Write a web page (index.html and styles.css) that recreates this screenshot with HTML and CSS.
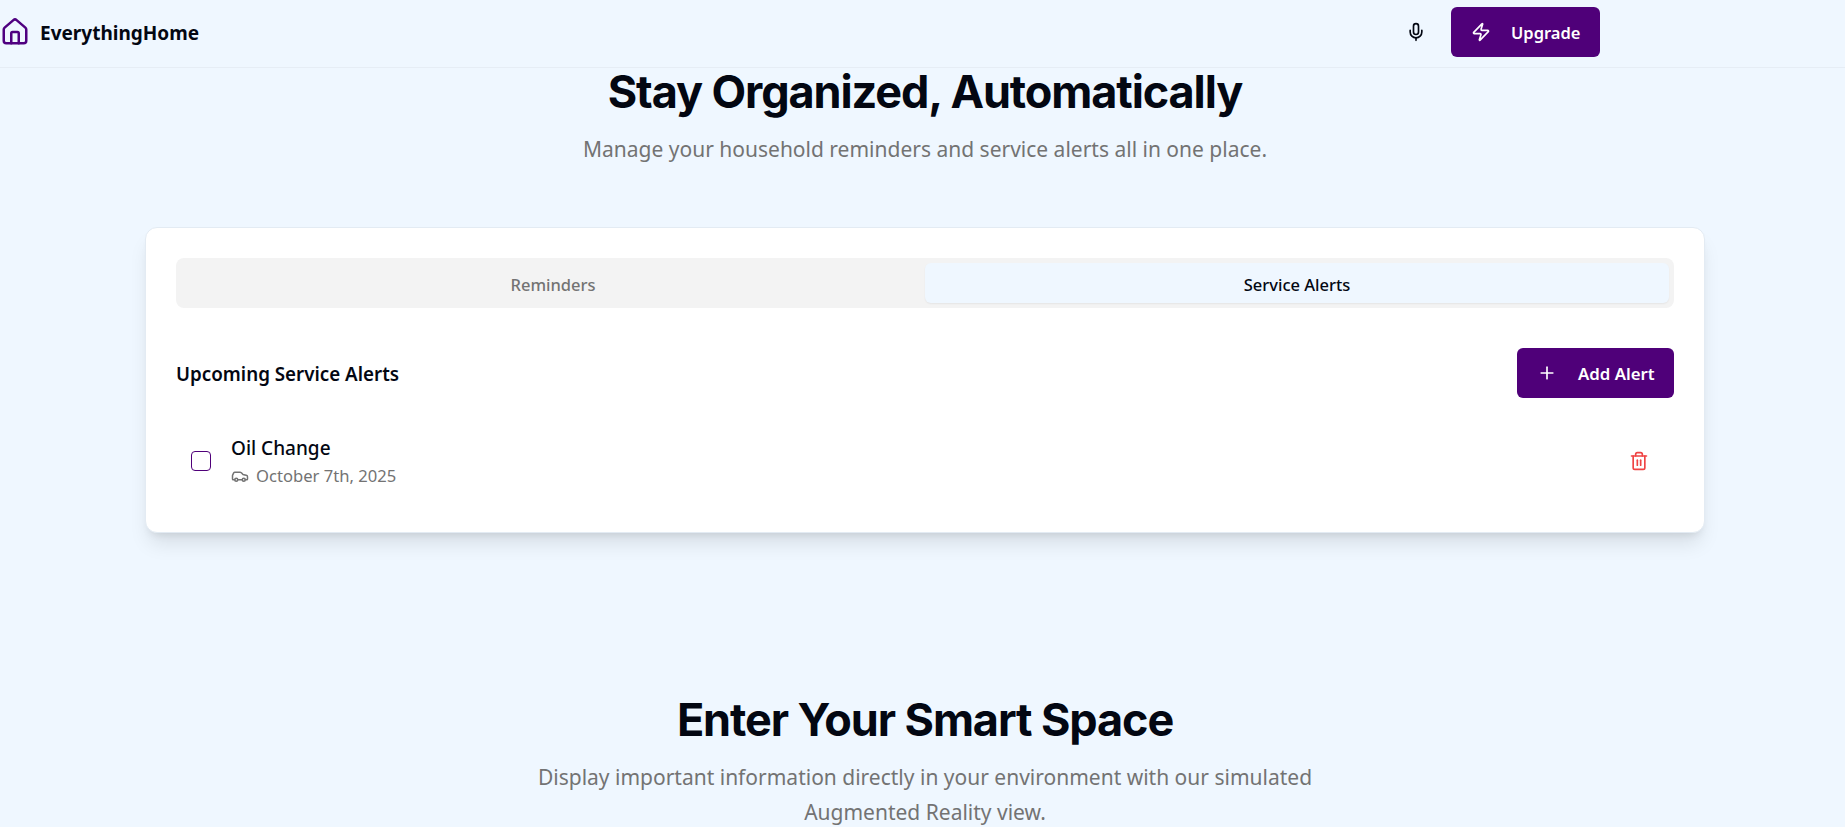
FILE: index.html
```html
<!DOCTYPE html>
<html>
  <head>
    <meta charset="UTF-8">
    <title>EverythingHome</title>
    <link rel="stylesheet" href="styles.css">
  </head>
  <body>
    <header class="topbar">
      <div class="brand">
        <svg class="brand-icon" viewBox="0 0 24 24"><path d="M15 21v-8a1 1 0 0 0-1-1h-4a1 1 0 0 0-1 1v8"/><path d="M3 10a2 2 0 0 1 .709-1.528l7-5.999a2 2 0 0 1 2.582 0l7 5.999A2 2 0 0 1 21 10v9a2 2 0 0 1-2 2H5a2 2 0 0 1-2-2z"/></svg>
        <span class="brand-name">EverythingHome</span>
      </div>
      <div class="topbar-actions">
        <svg class="mic-icon" viewBox="0 0 24 24"><path d="M12 2a3 3 0 0 0-3 3v7a3 3 0 0 0 6 0V5a3 3 0 0 0-3-3Z"/><path d="M19 10v2a7 7 0 0 1-14 0v-2"/><line x1="12" x2="12" y1="19" y2="22"/></svg>
        <button class="btn btn-upgrade">
          <svg class="btn-icon" viewBox="0 0 24 24"><path d="M4 14a1 1 0 0 1-.78-1.63l9.9-10.2a.5.5 0 0 1 .86.46l-1.92 6.02A1 1 0 0 0 13 10h7a1 1 0 0 1 .78 1.63l-9.9 10.2a.5.5 0 0 1-.86-.46l1.92-6.02A1 1 0 0 0 11 14z"/></svg>
          Upgrade
        </button>
      </div>
    </header>

    <main class="page">
      <section class="intro">
        <h1>Stay Organized, Automatically</h1>
        <p>Manage your household reminders and service alerts all in one place.</p>
      </section>

      <section class="card">
        <div class="tabs">
          <div class="tab">Reminders</div>
          <div class="tab tab-active">Service Alerts</div>
        </div>

        <div class="alerts-head">
          <h2>Upcoming Service Alerts</h2>
          <button class="btn btn-add">
            <svg class="btn-icon" viewBox="0 0 24 24"><path d="M5 12h14"/><path d="M12 5v14"/></svg>
            Add Alert
          </button>
        </div>

        <div class="alert-row">
          <span class="check"></span>
          <div class="alert-info">
            <div class="alert-title">Oil Change</div>
            <div class="alert-date">
              <svg class="car-icon" viewBox="0 0 24 24"><path d="M19 17h2c.6 0 1-.4 1-1v-3c0-.9-.7-1.700-1.500-1.900C18.700 10.600 16 10 16 10s-1.300-1.400-2.200-2.300c-.5-.4-1.100-.7-1.800-.7H5c-.6 0-1.100.4-1.400.9l-1.400 2.900A3.700 3.700 0 0 0 2 12v4c0 .6.4 1 1 1h2"/><circle cx="7" cy="17" r="2"/><path d="M9 17h6"/><circle cx="17" cy="17" r="2"/></svg>
              October 7th, 2025
            </div>
          </div>
          <svg class="trash-icon" viewBox="0 0 24 24"><path d="M3 6h18"/><path d="M19 6v14c0 1-1 2-2 2H7c-1 0-2-1-2-2V6"/><path d="M8 6V4c0-1 1-2 2-2h4c1 0 2 1 2 2v2"/><line x1="10" x2="10" y1="11" y2="17"/><line x1="14" x2="14" y1="11" y2="17"/></svg>
        </div>
      </section>

      <section class="intro intro-space">
        <h1>Enter Your Smart Space</h1>
        <p class="narrow">Display important information directly in your environment with our simulated Augmented Reality view.</p>
      </section>
    </main>
  </body>
</html>
```

FILE: styles.css
```css
html, body {
  margin: 0;
  height: 827px;
  overflow: hidden;
}

body {
  background-color: #eff7ff;
  color: #030712;
  font-family: "Noto Sans", sans-serif;
}

svg {
  fill: none;
  stroke: currentColor;
  stroke-width: 2;
  stroke-linecap: round;
  stroke-linejoin: round;
  flex-shrink: 0;
}

.topbar {
  height: 67px;
  border-bottom: 1px solid #e6edf5;
  display: flex;
  align-items: flex-start;
  justify-content: space-between;
  padding-right: 245px;
}

.brand {
  height: 65px;
  display: flex;
  align-items: center;
  gap: 10px;
}

.brand-icon {
  width: 30px;
  height: 30px;
  margin-top: -1px;
  color: #4f0080;
}

.brand-name {
  font-size: 19px;
  font-weight: 700;
}

.topbar-actions {
  height: 64px;
  display: flex;
  align-items: center;
  gap: 25px;
}

.mic-icon {
  width: 20px;
  height: 20px;
}

.btn {
  border: 0;
  border-radius: 6px;
  background-color: #4f0079;
  color: #fff;
  font-family: inherit;
  font-size: 16.500px;
  font-weight: 600;
  height: 50px;
  display: flex;
  align-items: center;
  white-space: nowrap;
}

.btn-icon {
  width: 20px;
  height: 20px;
}

.btn-upgrade {
  width: 149px;
  padding: 0 20px;
  gap: 20px;
}

.btn-add {
  width: 157px;
  padding: 0 20px;
  gap: 21px;
  font-size: 16.800px;
}

.page {
  padding: 0 140px 0 145px;
}

.intro {
  text-align: center;
}

.intro h1 {
  margin: 0;
  font-family: Inter, sans-serif;
  font-size: 45px;
  font-weight: 700;
  letter-spacing: -1.1px;
  line-height: 48px;
}

.intro p {
  margin: 16px 0 0;
  color: #737373;
  font-size: 21px;
  line-height: 35px;
}

.intro .narrow {
  width: 800px;
  margin: 16px auto 0;
}

.intro-space {
  margin-top: 163px;
}

.card {
  margin-top: 60px;
  height: 306px;
  box-sizing: border-box;
  padding: 30px;
  background-color: #fff;
  border: 1px solid #e3ebf3;
  border-radius: 12px;
  box-shadow: 0 14px 20px -4px rgba(0, 0, 0, 0.1), 0 6px 8px -5px rgba(0, 0, 0, 0.1);
}

.tabs {
  height: 50px;
  box-sizing: border-box;
  padding: 5px;
  display: grid;
  grid-template-columns: 1fr 1fr;
  background-color: #f3f3f3;
  border-radius: 8px;
}

.tab {
  display: flex;
  align-items: center;
  justify-content: center;
  padding-top: 2px;
  color: #737373;
  font-size: 16.500px;
  font-weight: 500;
  border-radius: 6px;
}

.tab-active {
  background-color: #eff7ff;
  color: #030712;
  box-shadow: 0 1px 2px rgba(0, 0, 0, 0.06);
}

.alerts-head {
  margin-top: 40px;
  display: flex;
  align-items: center;
  justify-content: space-between;
}

.alerts-head h2 {
  margin: 0;
  padding-top: 2px;
  font-size: 18.800px;
  font-weight: 600;
}

.alert-row {
  margin-top: 25px;
  height: 76px;
  padding: 0 25px 0 15px;
  display: flex;
  align-items: center;
}

.check {
  width: 20px;
  height: 20px;
  box-sizing: border-box;
  border: 1px solid #4f0079;
  border-radius: 4px;
}

.alert-info {
  margin-left: 20px;
  flex: 1;
}

.alert-title {
  font-size: 19px;
  font-weight: 500;
  line-height: 28px;
}

.alert-date {
  display: flex;
  align-items: center;
  gap: 7px;
  margin-top: 2px;
  color: #737373;
  font-size: 16.600px;
  line-height: 24px;
}

.car-icon {
  width: 18px;
  height: 18px;
}

.trash-icon {
  width: 20px;
  height: 20px;
  color: #ef4444;
}
```
